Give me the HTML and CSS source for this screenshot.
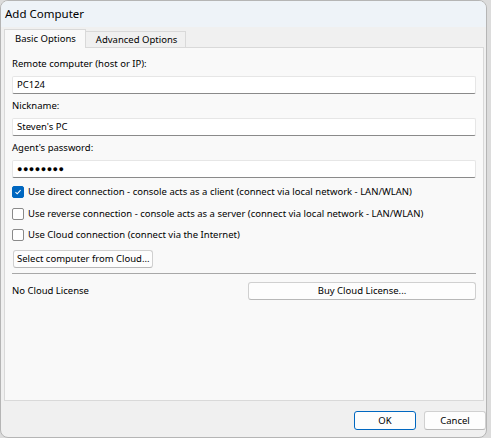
FILE: index.html
```html
<!DOCTYPE html>
<html lang="en">
<head>
  <meta charset="UTF-8">
  <title>Add Computer</title>
  <link rel="stylesheet" href="styles.css">
</head>
<body>

<div class="window">
  <div class="titlebar">Add Computer</div>

  <div class="tabs-area">
    <div class="tabs">
      <div class="tab active">Basic Options</div>
      <div class="tab">Advanced Options</div>
    </div>

    <div class="panel">
      <div class="label">Remote computer (host or IP):</div>
      <div class="field">PC124</div>

      <div class="label">Nickname:</div>
      <div class="field">Steven's PC</div>

      <div class="label">Agent's password:</div>
      <div class="field password">&#9679;&#9679;&#9679;&#9679;&#9679;&#9679;&#9679;&#9679;</div>

      <div class="checks">
        <div class="check-row">
          <span class="box checked">
            <svg width="8" height="8" viewBox="0 0 8 8"><path d="M1.5 4.2 L3.2 5.8 L6.6 2.2" fill="none" stroke="#fff" stroke-width="1.1"/></svg>
          </span>
          Use direct connection - console acts as a client (connect via local network - LAN/WLAN)
        </div>
        <div class="check-row">
          <span class="box"></span>
          Use reverse connection - console acts as a server (connect via local network - LAN/WLAN)
        </div>
        <div class="check-row">
          <span class="box"></span>
          Use Cloud connection (connect via the Internet)
        </div>
      </div>

      <div class="btn select-btn">Select computer from Cloud...</div>

      <div class="separator"></div>

      <div class="license-row">
        <span>No Cloud License</span>
        <div class="btn buy-btn">Buy Cloud License...</div>
      </div>
    </div>
  </div>

  <div class="footer">
    <div class="btn dlg-btn default">OK</div>
    <div class="btn dlg-btn">Cancel</div>
  </div>
</div>

</body>
</html>
```

FILE: styles.css
```css
body {
  margin: 0;
  background: #dcdcdc;
  font-family: "Noto Sans", "Open Sans", sans-serif;
  font-size: 9.5px;
  color: #000;
}
.window {
  width: 487px;
  height: 438px;
  box-sizing: border-box;
  border: 1px solid #b5b5b5;
  border-radius: 8px;
  overflow: hidden;
  display: flex;
  flex-direction: column;
  background: #f0f0f0;
}
.titlebar {
  height: 26px;
  line-height: 25px;
  padding-left: 4px;
  font-size: 11.5px;
  background: #eef3f8;
}
.tabs-area {
  flex: 1;
  padding: 2px 2px 0 3px;
  display: flex;
  flex-direction: column;
}
.tabs {
  display: flex;
  height: 18px;
}
.tab {
  padding: 0 8px 0 10px;
  line-height: 16px;
  margin-top: 2px;
  border: 1px solid #d9d9d9;
  border-bottom: none;
  border-left: none;
  background: #f0f0f0;
}
.tab.active {
  padding: 0 9px 0 10px;
  margin-top: 0;
  line-height: 18px;
  border-left: 1px solid #d9d9d9;
  background: #f9f9f9;
  position: relative;
  z-index: 1;
  margin-bottom: -1px;
}
.panel {
  height: 354px;
  box-sizing: border-box;
  background: #f9f9f9;
  border: 1px solid #d9d9d9;
  padding: 8px 7px 0 7px;
}
.label {
  line-height: 16px;
  margin-bottom: 4px;
}
.field {
  height: 18px;
  box-sizing: border-box;
  background: #fff;
  border: 1px solid #e6e6e6;
  border-bottom-color: #8a8a8a;
  border-radius: 2px;
  padding-left: 4px;
  line-height: 16px;
  margin-bottom: 4px;
}
.field.password {
  font-size: 9px;
  letter-spacing: 0.5px;
}
.checks {
  margin-top: 2px;
}
.check-row {
  display: flex;
  align-items: center;
  gap: 4px;
  height: 16px;
  margin-top: 6px;
}
.check-row:last-child {
  margin-top: 5px;
}
.box {
  width: 12px;
  height: 12px;
  box-sizing: border-box;
  border: 1px solid #8a8a8a;
  border-radius: 2px;
  background: #fff;
  display: flex;
  align-items: center;
  justify-content: center;
}
.box.checked {
  background: #0067c0;
  border-color: #0067c0;
}
.btn {
  height: 18px;
  box-sizing: border-box;
  border: 1px solid #d0d0d0;
  border-bottom-color: #b8b8b8;
  border-radius: 3px;
  background: #fdfdfd;
  line-height: 16px;
  text-align: center;
}
.select-btn {
  display: inline-block;
  margin: 7px 0 0 1px;
  padding: 0 2px 0 3px;
}
.separator {
  height: 1px;
  background: #a8a8a8;
  margin-top: 5px;
}
.license-row {
  display: flex;
  align-items: center;
  justify-content: space-between;
  margin-top: 8px;
}
.buy-btn {
  width: 228px;
}
.footer {
  height: 37px;
  display: flex;
  justify-content: flex-end;
  align-items: flex-start;
  gap: 8px;
}
.dlg-btn {
  width: 62px;
  height: 19px;
  line-height: 17px;
  margin-top: 10px;
}
.dlg-btn.default {
  border: 1px solid #0067c0;
}
```
